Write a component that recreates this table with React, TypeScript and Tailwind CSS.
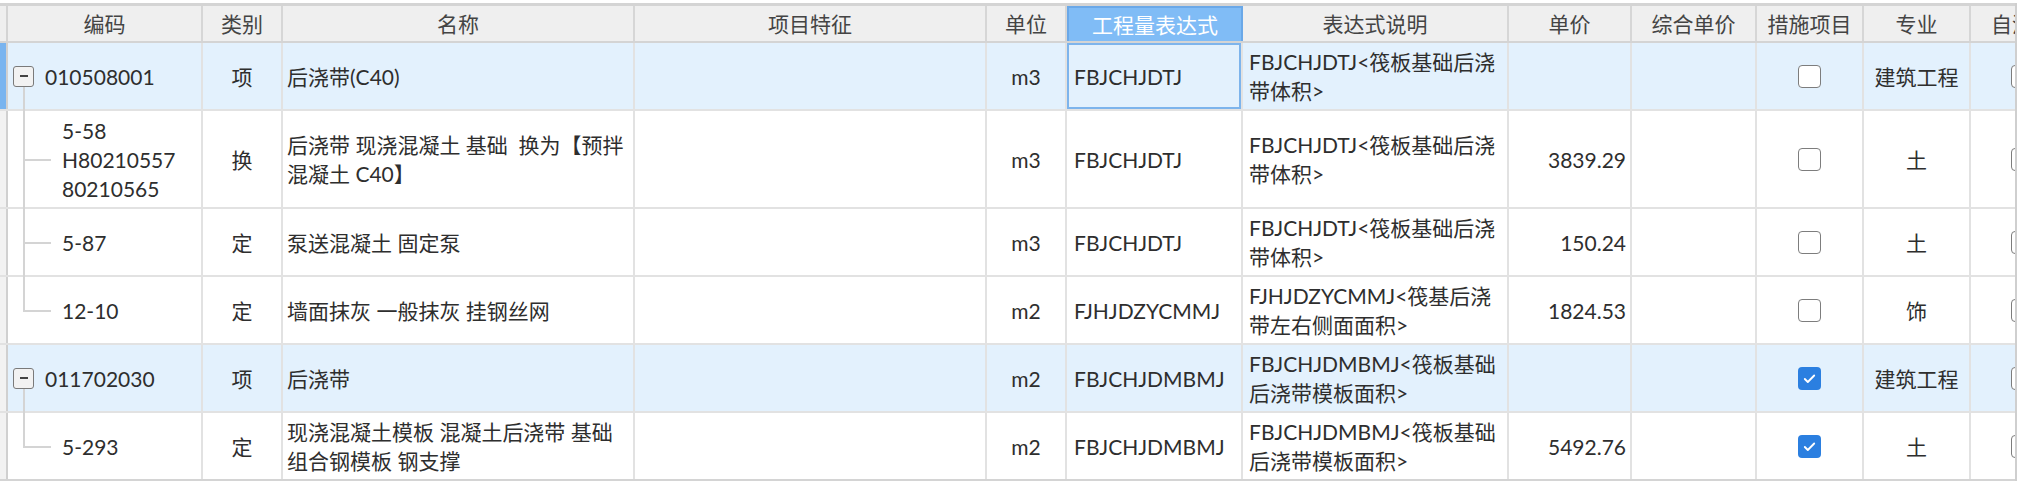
import * as React from "react"

const COLS =
  "grid w-max grid-cols-[8px_195px_80px_352px_352px_80px_176px_266px_123px_125px_107px_107px_105px]"

type Row = {
  kind: "parent" | "child"
  last?: boolean
  code: string[]
  type: string
  name: string[]
  unit: string
  expr: string
  desc: string[]
  price: string
  checked: boolean
  major: string
  height: string
}

const ROWS: Row[] = [
  {
    kind: "parent",
    code: ["010508001"],
    type: "项",
    name: ["后浇带(C40)"],
    unit: "m3",
    expr: "FBJCHJDTJ",
    desc: ["FBJCHJDTJ<筏板基础后浇", "带体积>"],
    price: "",
    checked: false,
    major: "建筑工程",
    height: "h-[68px]",
  },
  {
    kind: "child",
    code: ["5-58", "H80210557", "80210565"],
    type: "换",
    name: ["后浇带 现浇混凝土 基础  换为【预拌", "混凝土 C40】"],
    unit: "m3",
    expr: "FBJCHJDTJ",
    desc: ["FBJCHJDTJ<筏板基础后浇", "带体积>"],
    price: "3839.29",
    checked: false,
    major: "土",
    height: "h-[98px]",
  },
  {
    kind: "child",
    code: ["5-87"],
    type: "定",
    name: ["泵送混凝土 固定泵"],
    unit: "m3",
    expr: "FBJCHJDTJ",
    desc: ["FBJCHJDTJ<筏板基础后浇", "带体积>"],
    price: "150.24",
    checked: false,
    major: "土",
    height: "h-[68px]",
  },
  {
    kind: "child",
    last: true,
    code: ["12-10"],
    type: "定",
    name: ["墙面抹灰 一般抹灰 挂钢丝网"],
    unit: "m2",
    expr: "FJHJDZYCMMJ",
    desc: ["FJHJDZYCMMJ<筏基后浇", "带左右侧面面积>"],
    price: "1824.53",
    checked: false,
    major: "饰",
    height: "h-[68px]",
  },
  {
    kind: "parent",
    code: ["011702030"],
    type: "项",
    name: ["后浇带"],
    unit: "m2",
    expr: "FBJCHJDMBMJ",
    desc: ["FBJCHJDMBMJ<筏板基础", "后浇带模板面积>"],
    price: "",
    checked: true,
    major: "建筑工程",
    height: "h-[68px]",
  },
  {
    kind: "child",
    last: true,
    code: ["5-293"],
    type: "定",
    name: ["现浇混凝土模板 混凝土后浇带 基础", "组合钢模板 钢支撑"],
    unit: "m2",
    expr: "FBJCHJDMBMJ",
    desc: ["FBJCHJDMBMJ<筏板基础", "后浇带模板面积>"],
    price: "5492.76",
    checked: true,
    major: "土",
    height: "h-[68px]",
  },
]

const HEADERS = [
  "编码",
  "类别",
  "名称",
  "项目特征",
  "单位",
  "工程量表达式",
  "表达式说明",
  "单价",
  "综合单价",
  "措施项目",
  "专业",
  "自清单",
]

function Lines({ lines }: { lines: string[] }) {
  return (
    <div className="flex flex-col">
      {lines.map((l, i) => (
        <span key={i} className="whitespace-pre">
          {l}
        </span>
      ))}
    </div>
  )
}

function CheckBox({ checked }: { checked: boolean }) {
  if (checked) {
    return (
      <span className="flex h-[23px] w-[23px] shrink-0 items-center justify-center rounded-[4px] bg-[#2b7fe0]">
        <svg width="15" height="15" viewBox="0 0 16 16" fill="none">
          <path d="M3 8.5l3.2 3.2L13 4.8" stroke="white" strokeWidth="2" strokeLinecap="round" strokeLinejoin="round" />
        </svg>
      </span>
    )
  }
  return <span className="h-[23px] w-[23px] shrink-0 rounded-[4px] border-[1.5px] border-[#7d7d7d] bg-white" />
}

function CodeCell({ row }: { row: Row }) {
  if (row.kind === "parent") {
    return (
      <div className="relative flex items-center border-r-2 border-[#e2e2e2] pl-[5px]">
        <span className="flex h-[21px] w-[21px] shrink-0 items-center justify-center rounded-[3px] border-[1.5px] border-[#7a7a7a] bg-[#f2f2f2]">
          <span className="h-[2px] w-[8px] bg-[#444]" />
        </span>
        <span className="ml-[11px]">{row.code[0]}</span>
        <span className="absolute bottom-[-2px] left-[15px] top-[calc(50%+11px)] w-[2px] bg-[#d4d4d4]" />
      </div>
    )
  }
  return (
    <div className="relative flex items-center border-r-2 border-[#e2e2e2] pl-[54px]">
      <span
        className={
          row.last
            ? "absolute left-[15px] top-0 h-1/2 w-[2px] bg-[#d4d4d4]"
            : "absolute bottom-[-2px] left-[15px] top-0 w-[2px] bg-[#d4d4d4]"
        }
      />
      <span className="absolute left-[15px] top-1/2 h-[2px] w-[28px] bg-[#d4d4d4]" />
      <Lines lines={row.code} />
    </div>
  )
}

export default function App() {
  const cell = "flex items-center border-r-2 border-[#e2e2e2]"
  return (
    <div className="h-[485px] w-[2019px] overflow-hidden bg-white pt-[3px] text-[21px] leading-[29px] text-[#2e2e2e] [font-family:Lato,'Noto_Sans_CJK_SC',sans-serif]">
      <div className="w-[2017px] overflow-hidden border-r-2 border-[#cfcfcf]">
        {/* header */}
        <div className={`${COLS} h-[40px] border-y-2 border-t-[3px] border-[#d4d4d4] bg-[#efefef] text-[#444]`}>
          <div className="border-r-2 border-[#d4d4d4]" />
          {HEADERS.map((h) => (
            <div
              key={h}
              className={
                h === "工程量表达式"
                  ? "flex items-center justify-center border-2 border-b-0 border-[#6aa8e8] bg-[#80bcf6] text-white"
                  : "flex items-center justify-center border-r-2 border-[#d6d6d6]"
              }
            >
              {h}
            </div>
          ))}
        </div>

        {ROWS.map((row, i) => {
          const hl = row.kind === "parent"
          const selected = i === 0
          const last = i === ROWS.length - 1
          return (
            <div
              key={i}
              className={`${COLS} ${row.height} border-b-2 ${last ? "border-[#d4d4d4]" : "border-[#e2e2e2]"} ${
                hl ? "bg-[#e3f1fd]" : "bg-white"
              }`}
            >
              <div className={`border-r-2 border-[#d0d0d0] ${selected ? "bg-[#79b4ef]" : "bg-[#f2f2f2]"}`} />
              <CodeCell row={row} />
              <div className={`${cell} justify-center`}>{row.type}</div>
              <div className={`${cell} pl-[4px]`}>
                <Lines lines={row.name} />
              </div>
              <div className={cell} />
              <div className={`${cell} justify-center`}>{row.unit}</div>
              <div
                className={`${cell} pl-[7px] ${
                  selected ? "shadow-[inset_0_0_0_2px_#7db4ec]" : ""
                }`}
              >
                {row.expr}
              </div>
              <div className={`${cell} pl-[6px]`}>
                <Lines lines={row.desc} />
              </div>
              <div className={`${cell} justify-end pr-[4px]`}>{row.price}</div>
              <div className={cell} />
              <div className={`${cell} justify-center`}>
                <CheckBox checked={row.checked} />
              </div>
              <div className={`${cell} justify-center`}>{row.major}</div>
              <div className={`${cell} pl-[40px]`}>
                <CheckBox checked={false} />
              </div>
            </div>
          )
        })}
      </div>
    </div>
  )
}
